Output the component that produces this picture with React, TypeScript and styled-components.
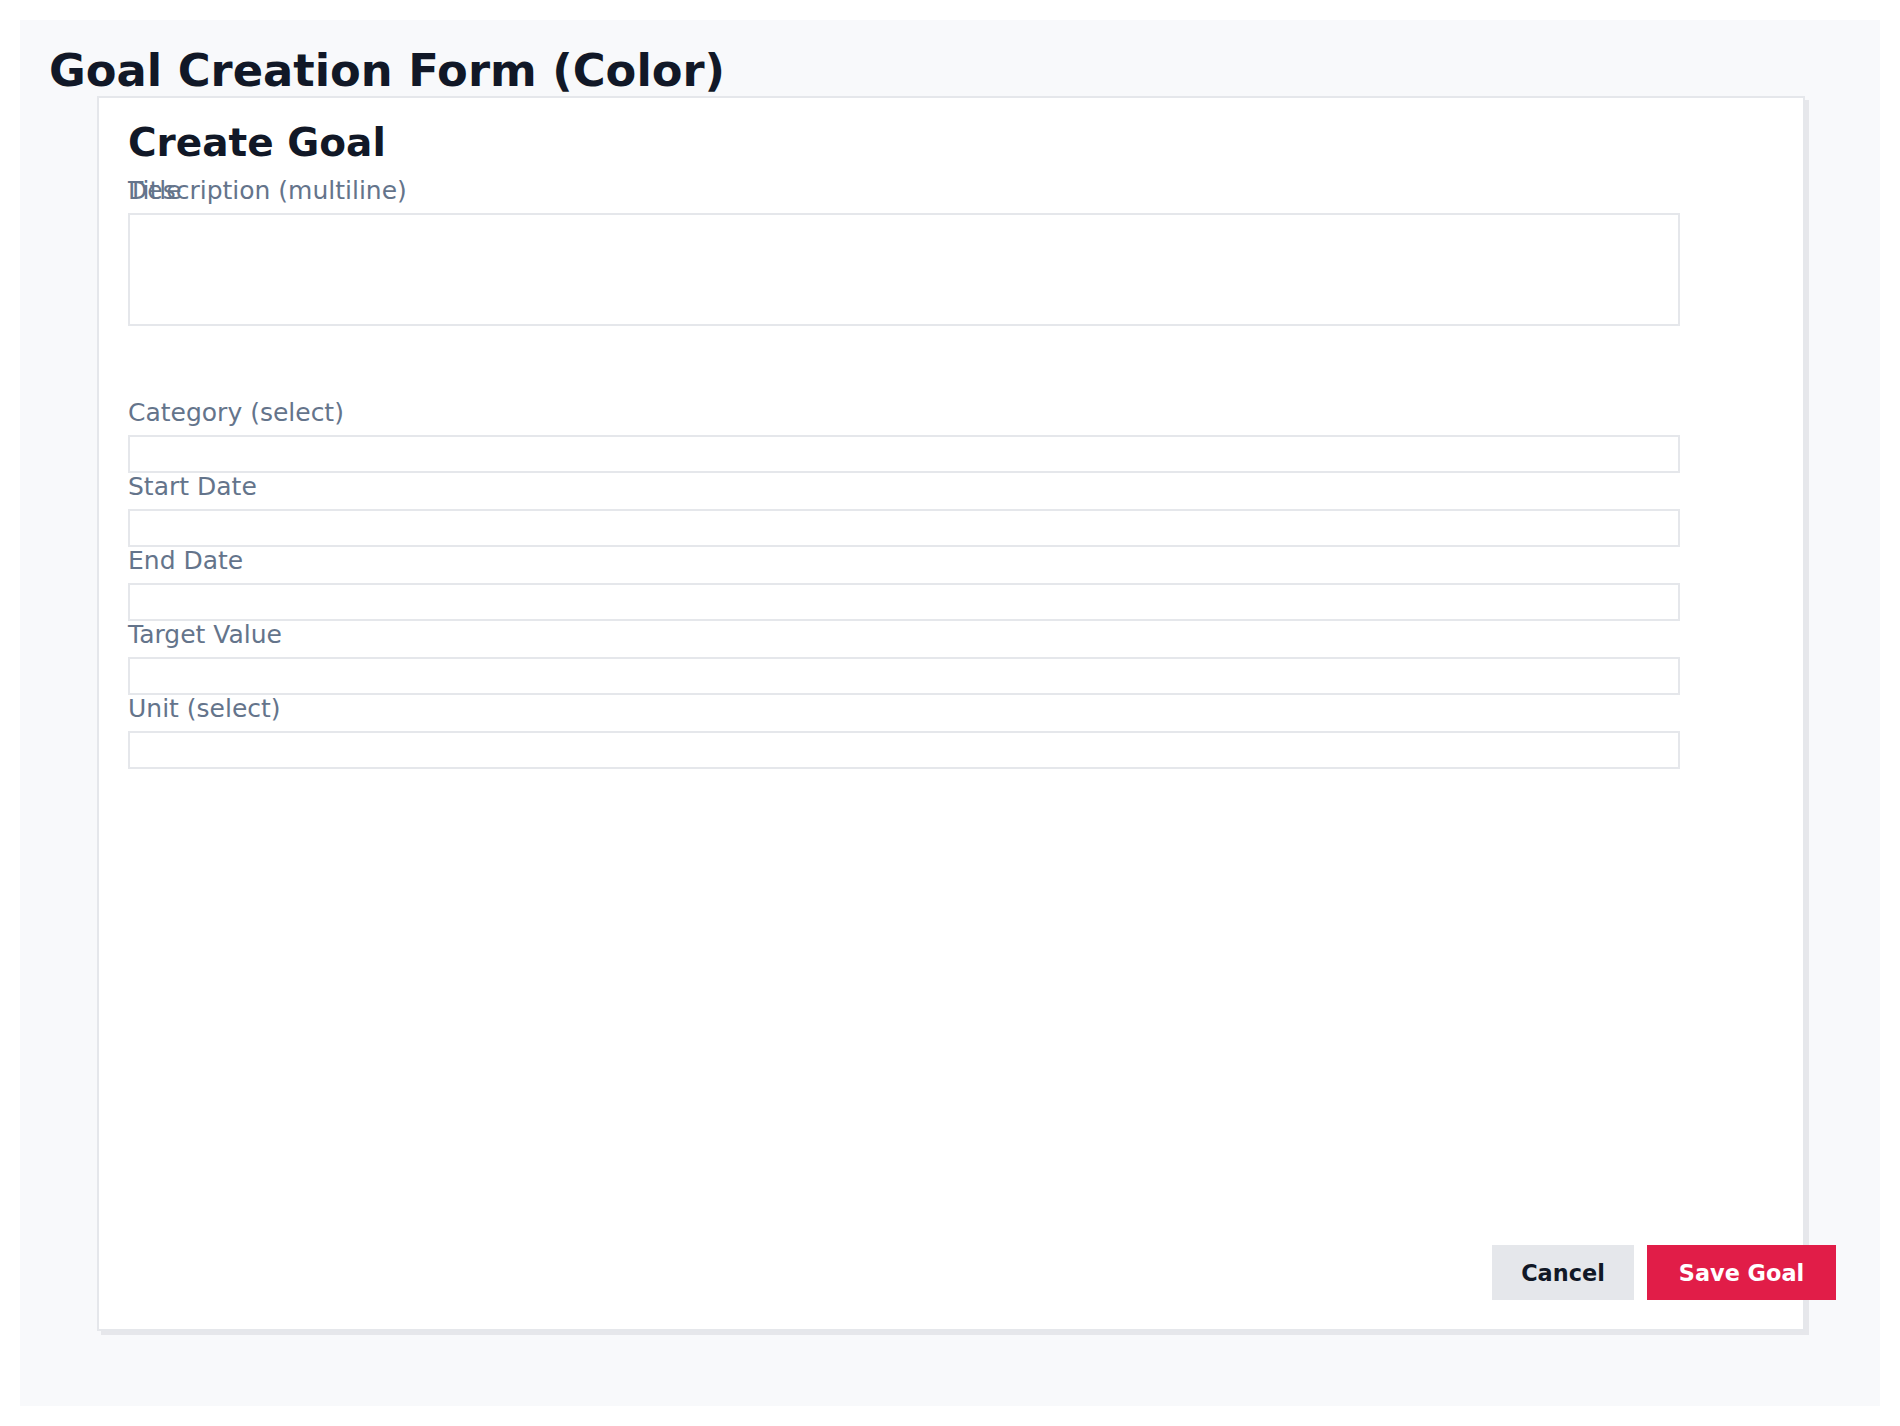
import React from "react";
import styled, { createGlobalStyle } from "styled-components";

const GlobalStyle = createGlobalStyle`
  html, body {
    margin: 0;
    padding: 0;
    background: #ffffff;
  }
  body {
    font-family: "DejaVu Sans", "Liberation Sans", sans-serif;
  }
  #root {
    padding: 20px;
  }
`;

const Frame = styled.main`
  box-sizing: border-box;
  width: 1860px;
  height: 1386px;
  background: #f8f9fb;
  padding: 26px 29px 0 29px;
`;

const PageTitle = styled.h1`
  margin: 0;
  font-size: 44.8px;
  line-height: 50px;
  font-weight: 700;
  color: #111827;
`;

const Card = styled.section`
  box-sizing: border-box;
  margin-left: 48px;
  width: 1708px;
  height: 1235px;
  background: #ffffff;
  border: 2px solid #e5e7eb;
  box-shadow: 4px 4px 0 #e6e7eb;
  padding: 22px 29px 29px 29px;
  display: flex;
  flex-direction: column;
`;

const CardTitle = styled.h2`
  margin: 0;
  font-size: 39px;
  line-height: 45px;
  font-weight: 700;
  color: #111827;
`;

const Stack = styled.div`
  display: grid;
  margin-top: 12px;
`;

const Label = styled.label`
  grid-area: 1 / 1;
  display: block;
  font-size: 25px;
  line-height: 28px;
  color: #64748b;
  margin-bottom: 8px;
`;

const FieldGroup = styled.div<{ $gap?: number }>`
  display: flex;
  flex-direction: column;
  margin-top: ${(p) => p.$gap ?? 0}px;
`;

const TextArea = styled.div`
  box-sizing: border-box;
  width: 1552px;
  height: 113px;
  border: 2px solid #e5e7eb;
  background: #ffffff;
`;

const Input = styled.div`
  box-sizing: border-box;
  width: 1552px;
  height: 38px;
  border: 2px solid #e5e7eb;
  background: #ffffff;
`;

const Field = styled.div`
  display: flex;
  flex-direction: column;
`;

const Footer = styled.div`
  margin-top: auto;
  margin-right: -62px;
  display: flex;
  justify-content: flex-end;
  gap: 13px;
`;

const Button = styled.button<{ $primary?: boolean; $w: number }>`
  box-sizing: border-box;
  width: ${(p) => p.$w}px;
  height: 55px;
  border: none;
  border-radius: 0;
  font-family: "DejaVu Sans", "Liberation Sans", sans-serif;
  font-size: 22.4px;
  font-weight: 700;
  cursor: pointer;
  background: ${(p) => (p.$primary ? "#e11d48" : "#e5e7eb")};
  color: ${(p) => (p.$primary ? "#ffffff" : "#111827")};
`;

const fields = ["Category (select)", "Start Date", "End Date", "Target Value", "Unit (select)"];

export default function App() {
  return (
    <>
      <GlobalStyle />
      <Frame>
        <PageTitle>Goal Creation Form (Color)</PageTitle>
        <Card>
          <CardTitle>Create Goal</CardTitle>
          <Stack>
            <Label>Title</Label>
            <Label>Description (multiline)</Label>
          </Stack>
          <TextArea />
          <FieldGroup $gap={73}>
            {fields.map((f) => (
              <Field key={f}>
                <Label>{f}</Label>
                <Input />
              </Field>
            ))}
          </FieldGroup>
          <Footer>
            <Button $w={142}>Cancel</Button>
            <Button $primary $w={189}>Save Goal</Button>
          </Footer>
        </Card>
      </Frame>
    </>
  );
}
